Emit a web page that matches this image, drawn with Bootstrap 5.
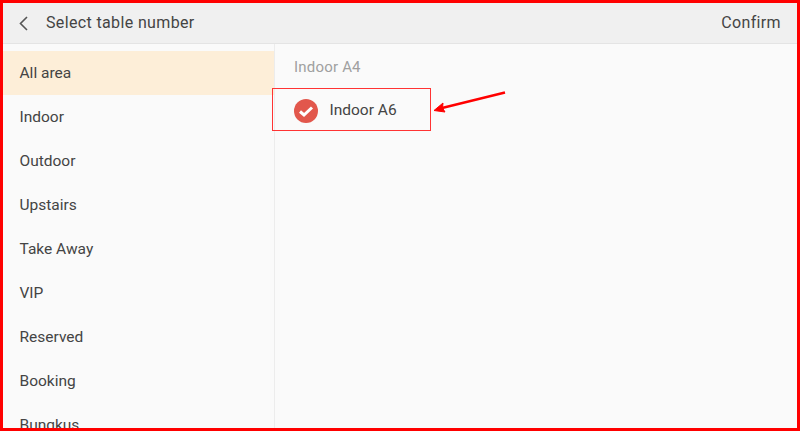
<!DOCTYPE html>
<html lang="en">
<head>
<meta charset="utf-8">
<title>Select table number</title>
<link rel="stylesheet" href="https://cdn.jsdelivr.net/npm/bootstrap@5.3.0/dist/css/bootstrap.min.css">
<style>
html,body{height:431px;overflow:hidden;margin:0}
body{background:#fafafa;font-family:Roboto,"Liberation Sans",sans-serif;color:#444}
.frame-box{height:431px;border:3px solid #f00;background:#fafafa;overflow:hidden;position:relative}
.top-bar{flex:none;height:41px;background:#f0f0f0;border-bottom:1px solid #e4e4e4;font-size:16px;padding-left:16px;padding-right:16px;letter-spacing:.36px}
.title-text{margin-left:18px}
.side-col{width:272px;border-right:1px solid #ececec;padding-top:7px;flex:none}
.area-item{height:44px;padding-left:16.5px;font-size:15.5px;line-height:44px;color:#444;letter-spacing:0}
.area-active{background:#fdeed8}
.main-col{padding-left:19px}
.group-label{font-size:15px;color:#a0a0a0;height:44px;padding-top:15px;line-height:17px;letter-spacing:.2px}
.table-row{height:46px;font-size:15.5px;letter-spacing:0}
.table-name{margin-left:11.5px}
.mark-box{position:absolute;left:269px;top:85px;width:159px;height:43px;border:1.5px solid #f33}
.arrow-over{position:absolute;left:429px;top:88px}
</style>
</head>
<body>
<div class="frame-box d-flex flex-column">
  <div class="top-bar d-flex align-items-center justify-content-between">
    <div class="d-flex align-items-center">
      <svg width="9" height="15" viewBox="0 0 9 15"><path d="M8 1 1.5 7.5 8 14" fill="none" stroke="#555" stroke-width="1.6"/></svg>
      <span class="title-text">Select table number</span>
    </div>
    <span>Confirm</span>
  </div>
  <div class="d-flex flex-grow-1" style="min-height:0">
    <div class="side-col">
      <div class="area-item area-active">All area</div>
      <div class="area-item">Indoor</div>
      <div class="area-item">Outdoor</div>
      <div class="area-item">Upstairs</div>
      <div class="area-item">Take Away</div>
      <div class="area-item">VIP</div>
      <div class="area-item">Reserved</div>
      <div class="area-item">Booking</div>
      <div class="area-item">Bungkus</div>
    </div>
    <div class="main-col flex-grow-1">
      <div class="group-label">Indoor A4</div>
      <div class="table-row d-flex align-items-center">
        <svg width="24" height="24" viewBox="0 0 24 24"><circle cx="12" cy="12" r="12" fill="#e2574c"/><path d="M6 12.5 10 16 18 8.5" fill="none" stroke="#fff" stroke-width="3"/></svg>
        <span class="table-name">Indoor A6</span>
      </div>
    </div>
  </div>
  <div class="mark-box"></div>
  <svg class="arrow-over" width="76" height="24" viewBox="0 0 76 24"><path d="M73 1.5 8 17.5" stroke="#f00" stroke-width="2.4" fill="none"/><path d="M2 19.5 11 12 10.5 17 13 21Z" fill="#f00" stroke="#f00" stroke-width="1"/></svg>
</div>
<script src="https://cdn.jsdelivr.net/npm/bootstrap@5.3.0/dist/js/bootstrap.bundle.min.js"></script>
</body>
</html>
